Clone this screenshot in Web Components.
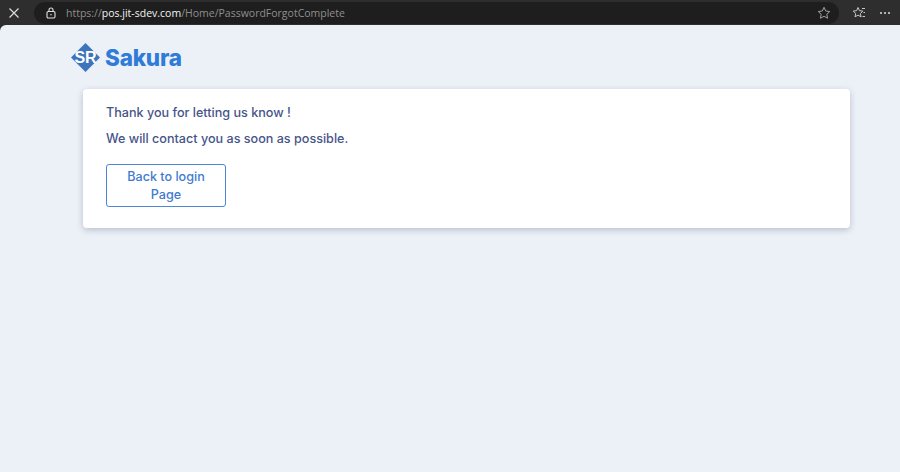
<!DOCTYPE html>
<html>
<head>
<meta charset="utf-8">
<title>Sakura</title>
<style>
  html, body { margin: 0; padding: 0; height: 100%; }
  body { background: #2b2b2b; font-family: "Inter", "Liberation Sans", sans-serif; overflow: hidden; }
</style>
</head>
<body>
<browser-bar></browser-bar>
<page-shell>
  <brand-logo></brand-logo>
  <message-card>
    <p>Thank you for letting us know !</p>
    <p>We will contact you as soon as possible.</p>
    <back-button>Back to login Page</back-button>
  </message-card>
</page-shell>

<script>
class BrowserBar extends HTMLElement {
  constructor() {
    super();
    this.shadowDOM = this.attachShadow({ mode: "open" });
    this.shadowDOM.innerHTML = `
      <style>
        :host {
          display: flex;
          align-items: center;
          height: 25px;
          background: #2e2e2e;
          font: 400 10.5px "Open Sans", "Liberation Sans", sans-serif;
          color: #8f8f8f;
        }
        svg { display: block; flex: none; }
        .close { margin-left: 8px; }
        .address {
          display: flex;
          align-items: center;
          box-sizing: border-box;
          width: 805px;
          height: 22px;
          margin-left: 14px;
          padding: 0 8px 0 12px;
          border-radius: 11px;
          background: #1e1e1e;
        }
        .url { margin-left: 10px; flex: 1; white-space: nowrap; }
        .url b { font-weight: 400; color: #f2f2f2; }
        .fav { margin-left: 13px; }
        .more { margin-left: 13px; }
      </style>
      <svg class="close" width="12" height="12" viewBox="0 0 12 12" fill="none" stroke="#dcdcdc" stroke-width="1.2">
        <path d="M1.5 1.5l9 9M10.5 1.5l-9 9"/>
      </svg>
      <div class="address">
        <svg width="10" height="12" viewBox="0 0 10 12" fill="none" stroke="#e0e0e0" stroke-width="1.1">
          <rect x="1" y="4.5" width="8" height="6.5" rx="1.2"/>
          <path d="M3 4.5V3a2 2 0 0 1 4 0v1.5"/>
          <path d="M4.2 7.7h1.6"/>
        </svg>
        <span class="url">https://<b>pos.jit-sdev.com</b>/Home/PasswordForgotComplete</span>
        <svg width="14" height="14" viewBox="0 0 14 14" fill="none" stroke="#a0a0a0" stroke-width="1">
          <path d="M7 1.3l1.75 3.7 4 .5-2.95 2.75.8 4L7 10.3l-3.6 1.95.8-4L1.25 5.5l4-.5z"/>
        </svg>
      </div>
      <svg class="fav" width="14" height="14" viewBox="0 0 14 14" fill="none" stroke="#c8c8c8" stroke-width="1">
        <path d="M6 1.5l1.5 3.2 3.4.4-2.5 2.4.7 3.4L6 9.1l-3 1.8.7-3.4L1.2 5.1l3.4-.4z"/>
        <path d="M10 2.5h3M11.5 6.5h1.5M10.5 10.5h2.5"/>
      </svg>
      <svg class="more" width="12" height="4" viewBox="0 0 12 4" fill="#d0d0d0">
        <circle cx="2" cy="2" r="1.1"/><circle cx="6" cy="2" r="1.1"/><circle cx="10" cy="2" r="1.1"/>
      </svg>
    `;
  }
}

class PageShell extends HTMLElement {
  constructor() {
    super();
    this.shadowDOM = this.attachShadow({ mode: "open" });
    this.shadowDOM.innerHTML = `
      <style>
        :host {
          display: block;
          box-sizing: border-box;
          height: 447px;
          padding: 18px 50px 0 71px;
          background: #ecf1f8;
          border-top-left-radius: 6px;
        }
      </style>
      <slot></slot>
    `;
  }
}

class BrandLogo extends HTMLElement {
  constructor() {
    super();
    this.shadowDOM = this.attachShadow({ mode: "open" });
    this.shadowDOM.innerHTML = `
      <style>
        :host {
          display: flex;
          align-items: center;
          gap: 5px;
          height: 29px;
          margin-bottom: 17px;
        }
        svg { display: block; flex: none; }
        .name {
          font: 800 22.5px "Inter", "Liberation Sans", sans-serif;
          letter-spacing: -0.2px;
          color: #2f7bd8;
        }
        text { font: 700 16px "Liberation Sans", sans-serif; fill: #fff; }
      </style>
      <svg width="29" height="29" viewBox="0 0 29 29">
        <path d="M14.5 0L29 14.5 14.5 29 0 14.5z" fill="#3d74bd"/>
        <text x="14.5" y="20" text-anchor="middle">SR</text>
      </svg>
      <span class="name">Sakura</span>
    `;
  }
}

class MessageCard extends HTMLElement {
  constructor() {
    super();
    this.shadowDOM = this.attachShadow({ mode: "open" });
    this.shadowDOM.innerHTML = `
      <style>
        :host {
          display: block;
          box-sizing: border-box;
          height: 139px;
          margin-left: 12px;
          padding: 15px 23px;
          background: #fff;
          border-radius: 4px;
          box-shadow: 0 2px 6px rgba(90, 100, 120, 0.35);
          font: 500 12.6px/18px "Inter", "Liberation Sans", sans-serif;
          color: #46548a;
        }
        ::slotted(p) { margin: 0 0 8px; }
      </style>
      <slot></slot>
    `;
  }
}

class BackButton extends HTMLElement {
  constructor() {
    super();
    this.shadowDOM = this.attachShadow({ mode: "open" });
    this.shadowDOM.innerHTML = `
      <style>
        :host {
          display: block;
          box-sizing: border-box;
          width: 120px;
          height: 43px;
          margin-top: 16px;
          padding: 3px 18px;
          border: 1px solid #4c86d6;
          border-radius: 3px;
          text-align: center;
          font: 500 12.6px/18px "Inter", "Liberation Sans", sans-serif;
          color: #3f7bd0;
          cursor: pointer;
        }
      </style>
      <slot></slot>
    `;
  }
}

customElements.define("browser-bar", BrowserBar);
customElements.define("page-shell", PageShell);
customElements.define("brand-logo", BrandLogo);
customElements.define("message-card", MessageCard);
customElements.define("back-button", BackButton);
</script>
</body>
</html>
